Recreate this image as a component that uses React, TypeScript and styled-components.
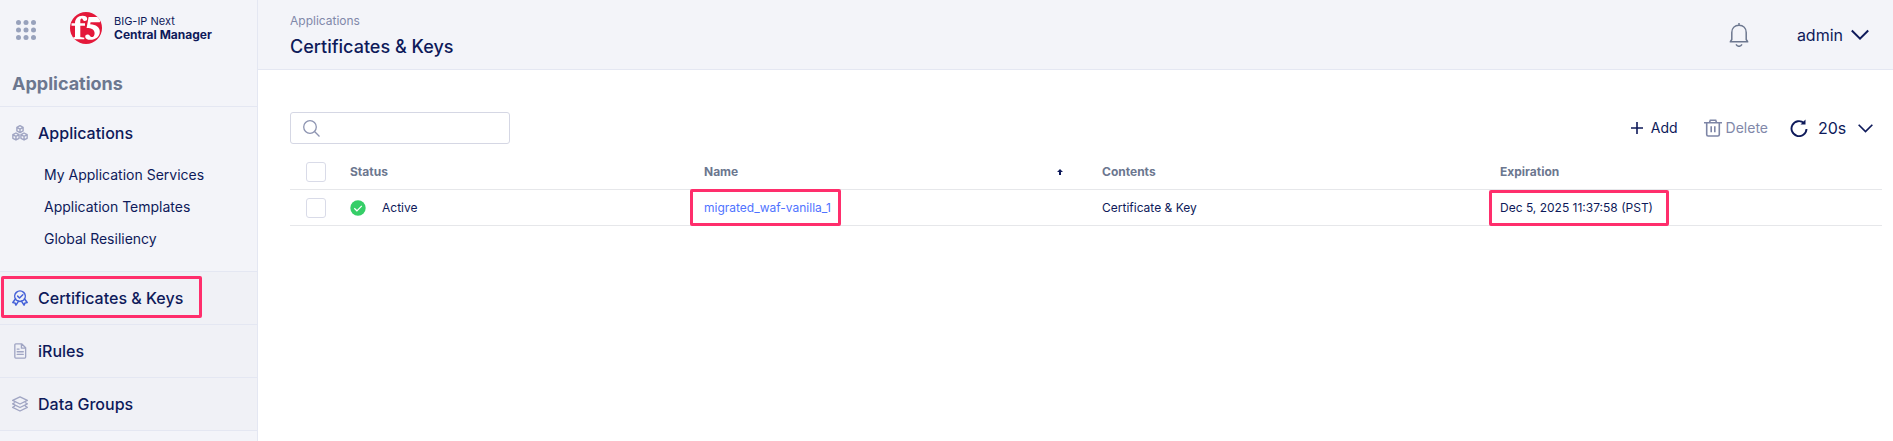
import React from "react";
import styled, { createGlobalStyle, css } from "styled-components";

const navy = "#0e1a5a";
const slate = "#6c778f";
const muted = "#8188a9";
const line = "#e4e7f2";
const pink = "#ff2e6c";

const GlobalStyle = createGlobalStyle`
  * { box-sizing: border-box; }
  body {
    margin: 0;
    background: #fff;
    color: ${navy};
    font-family: Inter, "Liberation Sans", sans-serif;
    font-size: 14px;
    line-height: 20px;
  }
  button, input, select { font: inherit; color: inherit; }
  a { color: inherit; text-decoration: none; }
  svg { display: block; flex: none; }
`;

const Shell = styled.div`
  display: grid;
  grid-template-columns: 258px minmax(0, 1fr);
  min-height: 100vh;
`;

const Sidebar = styled.aside`
  background: #f3f4f9;
  border-right: 1px solid ${line};
`;

const Brand = styled.div`
  display: flex;
  align-items: center;
  height: 56px;
  padding: 0 16px;
  gap: 34px;
`;

const IconButton = styled.button`
  display: flex;
  padding: 0;
  border: 0;
  background: none;
  cursor: pointer;
`;

const MenuButton = styled(IconButton)`
  padding-top: 4px;
`;

const BrandLink = styled.a`
  display: flex;
  align-items: center;
  gap: 12px;
`;

const BrandText = styled.span`
  display: flex;
  flex-direction: column;
  font-size: 11px;
  line-height: 14px;
`;

const BrandName = styled.strong`
  font-size: 12px;
  font-weight: 700;
`;

const SidebarTitle = styled.h2`
  margin: 0;
  padding: 14px 12px 8px;
  border-bottom: 1px solid ${line};
  color: ${slate};
  font-size: 18px;
  font-weight: 700;
  line-height: 28px;
`;

const NavList = styled.ul`
  margin: 0;
  padding: 0;
  list-style: none;
`;

const NavItem = styled.li<{ $shaded?: boolean }>`
  border-bottom: 1px solid ${line};
  background: ${(p) => (p.$shaded ? "#f0f1f6" : "transparent")};
`;

const NavLink = styled.a`
  display: flex;
  align-items: center;
  gap: 10px;
  height: 52px;
  padding: 0 12px;
  font-size: 16px;
  font-weight: 500;
`;

const SubList = styled.ul`
  margin: 0;
  padding: 0 0 16px 44px;
  list-style: none;
`;

const SubLink = styled.a`
  display: block;
  font-size: 14px;
  line-height: 32px;
`;

const Highlight = styled.div<{ $inset: string }>`
  position: relative;
  width: fit-content;
  &::after {
    content: "";
    position: absolute;
    inset: ${(p) => p.$inset};
    border: 3px solid ${pink};
    border-radius: 2px;
    pointer-events: none;
  }
`;

const Main = styled.div`
  display: flex;
  flex-direction: column;
`;

const Header = styled.header`
  display: flex;
  align-items: center;
  height: 70px;
  padding: 0 24px 0 32px;
  background: #f3f4f9;
  border-bottom: 1px solid ${line};
`;

const Heading = styled.div`
  flex: 1;
  padding-top: 2px;
`;

const Crumb = styled.a`
  display: block;
  color: ${muted};
  font-size: 12px;
  line-height: 16px;
`;

const Title = styled.h1`
  margin: 6px 0 0;
  font-size: 18px;
  font-weight: 500;
  line-height: 24px;
`;

const TextButton = styled.button<{ $large?: boolean; $gap: number }>`
  display: flex;
  align-items: center;
  gap: ${(p) => p.$gap}px;
  padding: 0;
  border: 0;
  background: none;
  font-size: ${(p) => (p.$large ? 16 : 14)}px;
  font-weight: 400;
  cursor: pointer;
  &:disabled { color: ${muted}; cursor: default; }
`;

const HeaderActions = styled.div`
  display: flex;
  align-items: center;
  gap: 48px;
`;

const Content = styled.main`
  padding: 42px 11px 24px 32px;
`;

const Toolbar = styled.div`
  display: flex;
  align-items: center;
  justify-content: space-between;
  padding-right: 9px;
`;

const SearchBox = styled.label`
  display: flex;
  align-items: center;
  gap: 8px;
  width: 220px;
  height: 32px;
  padding: 0 12px;
  border: 1px solid #d5d7e4;
  border-radius: 3px;
  input {
    flex: 1;
    min-width: 0;
    padding: 0;
    border: 0;
    outline: 0;
    background: none;
  }
`;

const Actions = styled.div`
  display: flex;
  align-items: center;
  gap: 26px;
`;

const Refresh = styled.div`
  display: flex;
  align-items: center;
  gap: 10px;
  margin-left: -4px;
`;

const IntervalBox = styled.div`
  display: grid;
  align-items: center;
  grid-template-columns: 40px 15px;
  svg { grid-area: 1 / 2; pointer-events: none; }
`;

const Interval = styled.select`
  grid-area: 1 / 1 / 2 / 3;
  width: 100%;
  padding: 0;
  border: 0;
  background: none;
  appearance: none;
  font-size: 16px;
`;

const Table = styled.table`
  width: 100%;
  margin-top: 10px;
  border-collapse: separate;
  border-spacing: 0;
  table-layout: fixed;
`;

const cell = css`
  height: 36px;
  padding: 0 16px;
  border-bottom: 1px solid #e6e7ea;
  text-align: left;
  font-size: 12px;
  line-height: 16px;
`;

const Th = styled.th`
  ${cell}
  color: ${slate};
  font-weight: 700;
`;

const Td = styled.td`
  ${cell}
`;

const SortHead = styled.div`
  display: flex;
  align-items: center;
  justify-content: space-between;
  padding-right: 7px;
`;

const StatusLine = styled.div`
  display: flex;
  align-items: center;
`;

const StatusText = styled.span`
  display: flex;
  align-items: center;
  gap: 16px;
`;

const CheckSlot = styled.span`
  display: flex;
  width: 44px;
`;

const Checkbox = styled.input`
  appearance: none;
  width: 20px;
  height: 20px;
  margin: 0;
  border: 1px solid #d9dbe8;
  border-radius: 3px;
  background: #fff;
  &:checked { background: #4f73ff; }
`;

const NameLink = styled.a`
  color: #4f73ff;
`;

const GridDots = () => (
  <svg width="20" height="20" viewBox="0 0 20 20" fill="#98a2bc">
    {[2.5, 10, 17.5].map((y) =>
      [2.5, 10, 17.5].map((x) => <circle key={`${x}-${y}`} cx={x} cy={y} r="2.5" />)
    )}
  </svg>
);

const Logo = () => (
  <svg width="32" height="32" viewBox="0 0 32 32">
    <defs>
      <clipPath id="disc"><circle cx="16" cy="16" r="16" /></clipPath>
    </defs>
    <circle cx="16" cy="16" r="16" fill="#e4183a" />
    <g clipPath="url(#disc)" fill="#fff">
      <path d="M2.500 27.200V25.800L5 25V13.800H1.500V11.200H5C5 6.800 8 3.800 12.500 3.800c3 0 4.700 1.100 4.700 3 0 1.400-1 2.200-2.300 2.200-2 0-2-2.600-3.200-2.600-1 0-1.400.9-1.400 2.600v2.200h4.700v2.600h-4.700V25l4 .8v1.400z" />
      <path d="M18.600 5H31l-1.200 5.200H20.600l-.4 2.100c6 .4 9.600 2.900 9.600 7.400 0 4.900-4.300 8.100-9.400 8.100-3.200 0-5.200-1.200-5.200-3.100 0-1.400 1-2.300 2.400-2.300 2.200 0 2.400 2.700 4.300 2.700 1.600 0 2.700-1.500 2.700-3.900 0-3.700-2.900-5.200-8-5.300z" />
    </g>
  </svg>
);

const CUBE = "M0-3.700 3.300-1.900V1.900L0 3.700-3.300 1.900V-1.900ZM-3.300-1.900 0-.1 3.300-1.900M0-.1V3.700";
const Cubes = () => (
  <svg width="16" height="16" viewBox="0 0 17 17" fill="none" stroke="#a0a5c3" strokeWidth="1.500" strokeLinejoin="round">
    <path d={CUBE} transform="translate(8.5 4.400)" />
    <path d={CUBE} transform="translate(4.200 12.200)" />
    <path d={CUBE} transform="translate(12.800 12.200)" />
  </svg>
);

const Award = () => (
  <svg width="16" height="16" viewBox="0 0 17 17" fill="none" stroke="#4561d8" strokeWidth="1.600" strokeLinecap="round" strokeLinejoin="round">
    <path d="M4.200 10.200A5.600 5.600 0 1 1 12.800 10.200" />
    <path d="m6 6.500 2 2 3.500-3.500M5 11l3.500 1.300L12 11" />
    <path d="M3.600 9.500.9 13.300l2.300.4 1 2.400L6.800 12M13.400 9.500l2.700 3.800-2.300.4-1 2.400L10.200 12" />
  </svg>
);

const FileText = () => (
  <svg width="16" height="16" viewBox="0 0 17 17" fill="none" stroke="#a0a5c3" strokeWidth="1.400" strokeLinecap="round" strokeLinejoin="round">
    <path d="M4 1H10.500L14.500 5V15a1 1 0 0 1-1 1H4a1 1 0 0 1-1-1V2a1 1 0 0 1 1-1ZM10 1V5.500H14.500M5.500 6.500h2M5.500 9.300h6.500M5.500 12h6.500" />
  </svg>
);

const Layers = () => (
  <svg width="16" height="16" viewBox="0 0 17 17" fill="none" stroke="#a0a5c3" strokeWidth="1.400" strokeLinejoin="round">
    <path d="M8.500.9 16.300 4.700 8.500 8.500.7 4.700ZM3.200 6.900.7 8.300l7.800 3.900 7.800-3.900-2.500-1.400M3.200 10.500.7 12l7.800 3.900 7.800-3.900-2.500-1.500" />
  </svg>
);

const Bell = () => (
  <svg width="20" height="24" viewBox="0 0 20 24" fill="none" stroke={slate} strokeWidth="1.500" strokeLinejoin="round">
    <path d="M10 0v2M.7 18.800H19.300M1.500 18.500 2.800 16.500V9.500C2.800 5 5.800 2.200 10 2.200s7.200 2.800 7.200 7.300v7l1.300 2M7 21.300c.8 1.300 1.800 2 3 2s2.200-.7 3-2" />
  </svg>
);

const Chevron = ({ size }: { size: number }) => (
  <svg width={size} height={size} viewBox="0 0 18 18" fill="none" stroke={navy} strokeWidth="2">
    <path d="m.8 4.500 8.200 8.200 8.200-8.200" />
  </svg>
);

const SearchIcon = () => (
  <svg width="17" height="17" viewBox="0 0 17 17" fill="none" stroke="#8d94b1" strokeWidth="1.300">
    <circle cx="7" cy="7" r="6.300" />
    <path d="m11.300 11.300 5.200 5.200" />
  </svg>
);

const Plus = () => (
  <svg width="12" height="12" viewBox="0 0 12 12" stroke={navy} strokeWidth="1.600">
    <path d="M6 0v12M0 6h12" />
  </svg>
);

const Trash = () => (
  <svg width="18" height="18" viewBox="0 0 18 18" fill="none" stroke="#7d85a6" strokeWidth="1.600">
    <path d="M0 3.800h18M5.500 3.500 6.300 1.200h5.400l.8 2.300M2.700 4v11.500q0 1.500 1.500 1.500h9.600q1.500 0 1.500-1.500V4M7.200 7.300v6M10.800 7.300v6" />
  </svg>
);

const RefreshIcon = () => (
  <svg width="18" height="18" viewBox="0 0 18 18" fill="none" stroke={navy} strokeWidth="1.900">
    <path d="M16.500 10A7.500 7.500 0 1 1 14 4" />
    <path d="M15.500.5V5.500H10.500Z" fill={navy} stroke="none" />
  </svg>
);

const SortUp = () => (
  <svg width="6" height="6" viewBox="0 0 6 6">
    <path d="M3 0 6 3H4V6H2V3H0Z" fill={navy} />
  </svg>
);

const CheckCircle = () => (
  <svg width="16" height="16" viewBox="0 0 16 16">
    <circle cx="8" cy="8" r="7.700" fill="#35ce67" />
    <path d="m4.300 8.300 2.600 2.500 4.900-5" fill="none" stroke="#fff" strokeWidth="1.200" />
  </svg>
);

export default function App() {
  return (
    <Shell>
      <GlobalStyle />
      <Sidebar>
        <Brand>
          <MenuButton aria-label="Open workspace menu"><GridDots /></MenuButton>
          <BrandLink href="#home">
            <Logo />
            <BrandText>
              BIG-IP Next
              <BrandName>Central Manager</BrandName>
            </BrandText>
          </BrandLink>
        </Brand>
        <SidebarTitle>Applications</SidebarTitle>
        <nav>
          <NavList>
            <NavItem>
              <NavLink href="#applications"><Cubes />Applications</NavLink>
              <SubList>
                <li><SubLink href="#services">My Application Services</SubLink></li>
                <li><SubLink href="#templates">Application Templates</SubLink></li>
                <li><SubLink href="#resiliency">Global Resiliency</SubLink></li>
              </SubList>
            </NavItem>
            <NavItem $shaded>
              <Highlight $inset="4px -7px 6px 1px">
                <NavLink href="#certificates"><Award />Certificates &amp; Keys</NavLink>
              </Highlight>
            </NavItem>
            <NavItem $shaded>
              <NavLink href="#irules"><FileText />iRules</NavLink>
            </NavItem>
            <NavItem $shaded>
              <NavLink href="#data-groups"><Layers />Data Groups</NavLink>
            </NavItem>
          </NavList>
        </nav>
      </Sidebar>
      <Main>
        <Header>
          <Heading>
            <Crumb href="#applications">Applications</Crumb>
            <Title>Certificates &amp; Keys</Title>
          </Heading>
          <HeaderActions>
            <IconButton aria-label="Notifications"><Bell /></IconButton>
            <TextButton $large $gap={8}>admin<Chevron size={18} /></TextButton>
          </HeaderActions>
        </Header>
        <Content>
          <Toolbar>
            <SearchBox>
              <SearchIcon />
              <input type="search" aria-label="Search certificates" />
            </SearchBox>
            <Actions>
              <TextButton $gap={8}><Plus />Add</TextButton>
              <TextButton $gap={4} disabled><Trash />Delete</TextButton>
              <Refresh>
                <IconButton aria-label="Refresh now"><RefreshIcon /></IconButton>
                <IntervalBox>
                  <Interval aria-label="Refresh interval" defaultValue="20s">
                    <option>20s</option>
                  </Interval>
                  <Chevron size={15} />
                </IntervalBox>
              </Refresh>
            </Actions>
          </Toolbar>
          <Table>
            <thead>
              <tr>
                <Th>
                  <StatusLine>
                    <CheckSlot><Checkbox type="checkbox" aria-label="Select all" /></CheckSlot>
                    Status
                  </StatusLine>
                </Th>
                <Th aria-sort="ascending"><SortHead>Name<SortUp /></SortHead></Th>
                <Th>Contents</Th>
                <Th>Expiration</Th>
              </tr>
            </thead>
            <tbody>
              <tr>
                <Td>
                  <StatusLine>
                    <CheckSlot><Checkbox type="checkbox" aria-label="Select migrated_waf-vanilla_1" /></CheckSlot>
                    <StatusText><CheckCircle />Active</StatusText>
                  </StatusLine>
                </Td>
                <Td>
                  <Highlight $inset="-11px -10px -10px -14px">
                    <NameLink href="#certificate">migrated_waf-vanilla_1</NameLink>
                  </Highlight>
                </Td>
                <Td>Certificate &amp; Key</Td>
                <Td>
                  <Highlight $inset="-10px -16px -10px -11px">Dec 5, 2025 11:37:58 (PST)</Highlight>
                </Td>
              </tr>
            </tbody>
          </Table>
        </Content>
      </Main>
    </Shell>
  );
}
